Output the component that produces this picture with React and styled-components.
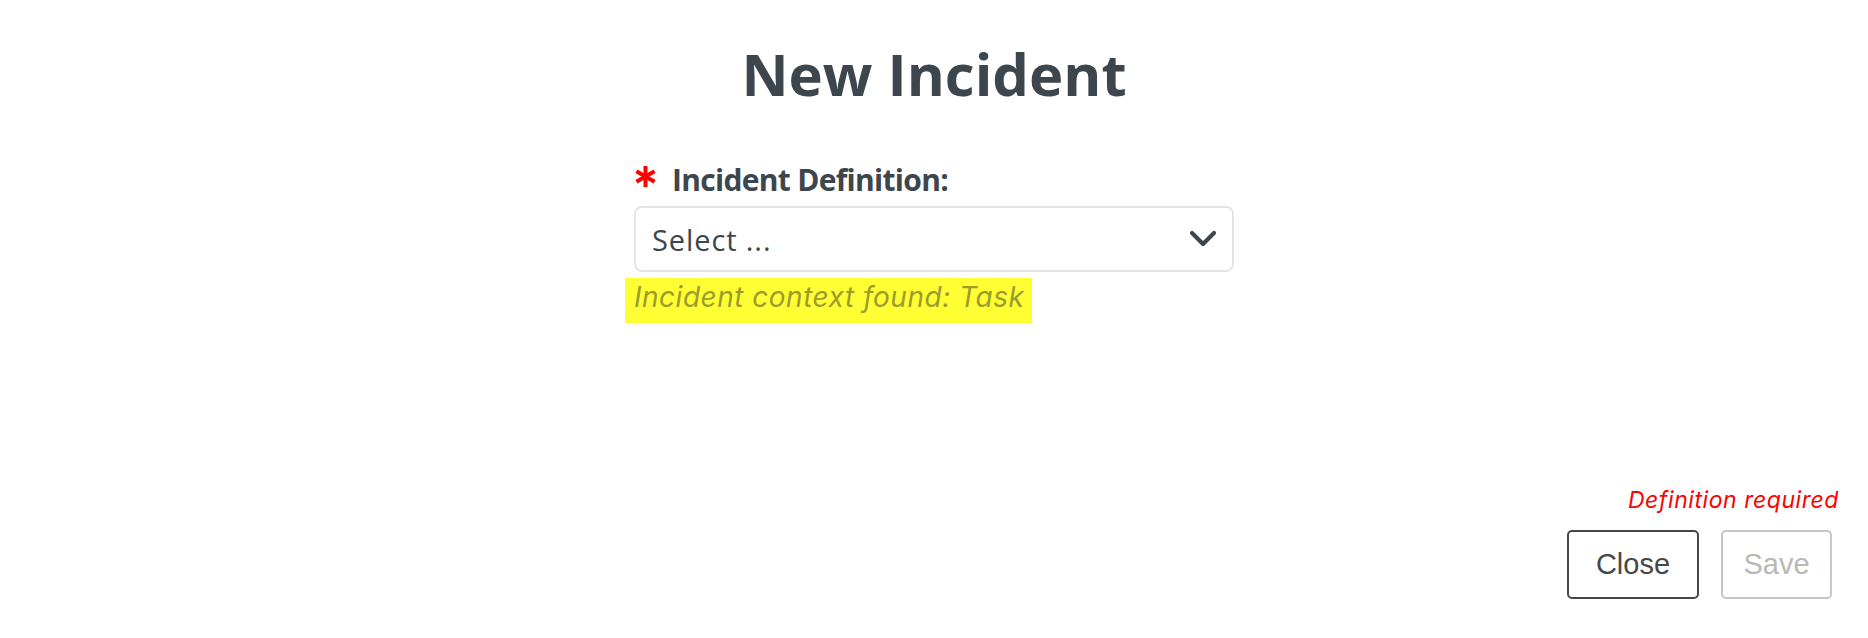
import React from "react";
import styled, { createGlobalStyle } from "styled-components";

const GlobalStyle = createGlobalStyle`
  html, body {
    margin: 0;
    padding: 0;
    background: #ffffff;
  }
  body {
    font-family: "Open Sans", "Noto Sans", sans-serif;
    color: #3d464d;
  }
  * { box-sizing: border-box; }
`;

const Page = styled.div`
  width: 100%;
  height: 638px;
  display: flex;
  flex-direction: column;
  background: #fff;
`;

const Title = styled.h1`
  margin: 44px 0 0;
  height: 60px;
  font-size: 58px;
  line-height: 60px;
  font-weight: 700;
  text-align: center;
  color: #3d464d;
`;

const Form = styled.div`
  width: 600px;
  margin: 58px auto 0;
  display: flex;
  flex-direction: column;
  align-items: flex-start;
`;

const LabelRow = styled.div`
  display: flex;
  align-items: center;
  gap: 15px;
  height: 36px;
`;

const Label = styled.label`
  font-size: 30px;
  line-height: 36px;
  font-weight: 700;
  letter-spacing: -0.7px;
  color: #3d464d;
`;

const Required = styled.svg`
  width: 23px;
  height: 23px;
  margin-top: -8px;
  flex: none;
`;

const SelectBox = styled.div`
  margin-top: 8px;
  width: 600px;
  height: 66px;
  border: 2px solid #e4e4e4;
  border-radius: 8px;
  display: flex;
  align-items: center;
  justify-content: space-between;
  padding: 0 15px 0 16px;
  background: #fff;
`;

const Placeholder = styled.span`
  font-size: 29px;
  letter-spacing: 0.9px;
  color: #3d464d;
`;

const Chevron = styled.svg`
  width: 28px;
  height: 18px;
  flex: none;
`;

const Hint = styled.span`
  margin: 6px 0 0 -9px;
  display: inline-block;
  background: #ffff33;
  padding: 0 8px 7px 9px;
  line-height: 38px;
  font-family: Inter, "Open Sans", sans-serif;
  font-size: 28px;
  letter-spacing: 0.5px;
  font-style: italic;
  color: #9c9c2c;
`;

const Footer = styled.div`
  margin-top: auto;
  display: flex;
  flex-direction: column;
  align-items: flex-end;
  padding: 0 36px 39px 0;
`;

const ErrorText = styled.div`
  font-family: Inter, "Open Sans", sans-serif;
  font-size: 23px;
  line-height: 28px;
  letter-spacing: 0.55px;
  font-style: italic;
  color: #ff0000;
  margin-right: -7px;
`;

const Buttons = styled.div`
  margin-top: 16px;
  display: flex;
  gap: 22px;
`;

const Button = styled.button`
  height: 69px;
  width: ${(p) => p.$width}px;
  border: 2px solid ${(p) => (p.$disabled ? "#c6c6c2" : "#474747")};
  border-radius: 5px;
  background: #fff;
  color: ${(p) => (p.$disabled ? "#b9b9b4" : "#474747")};
  font-family: "Liberation Sans", Arial, sans-serif;
  font-size: 29px;
  padding: 0;
  display: flex;
  align-items: center;
  justify-content: center;
  cursor: ${(p) => (p.$disabled ? "default" : "pointer")};
`;

export default function App() {
  return (
    <>
      <GlobalStyle />
      <Page>
        <Title>New Incident</Title>
        <Form>
          <LabelRow>
            <Required viewBox="0 0 24 24" aria-hidden="true">
              <g stroke="#ff0000" strokeWidth="4.2" strokeLinecap="butt">
                <line x1="12" y1="1" x2="12" y2="23" />
                <line x1="2.5" y1="6.5" x2="21.5" y2="17.5" />
                <line x1="2.5" y1="17.5" x2="21.5" y2="6.5" />
              </g>
            </Required>
            <Label>Incident Definition:</Label>
          </LabelRow>
          <SelectBox>
            <Placeholder>Select ...</Placeholder>
            <Chevron viewBox="0 0 28 18" aria-hidden="true">
              <polyline
                points="3,3 14,14 25,3"
                fill="none"
                stroke="#3d464d"
                strokeWidth="4.2"
                strokeLinecap="round"
                strokeLinejoin="round"
              />
            </Chevron>
          </SelectBox>
          <Hint>Incident context found: Task</Hint>
        </Form>
        <Footer>
          <ErrorText>Definition required</ErrorText>
          <Buttons>
            <Button $width={132}>Close</Button>
            <Button $width={111} $disabled disabled>
              Save
            </Button>
          </Buttons>
        </Footer>
      </Page>
    </>
  );
}
